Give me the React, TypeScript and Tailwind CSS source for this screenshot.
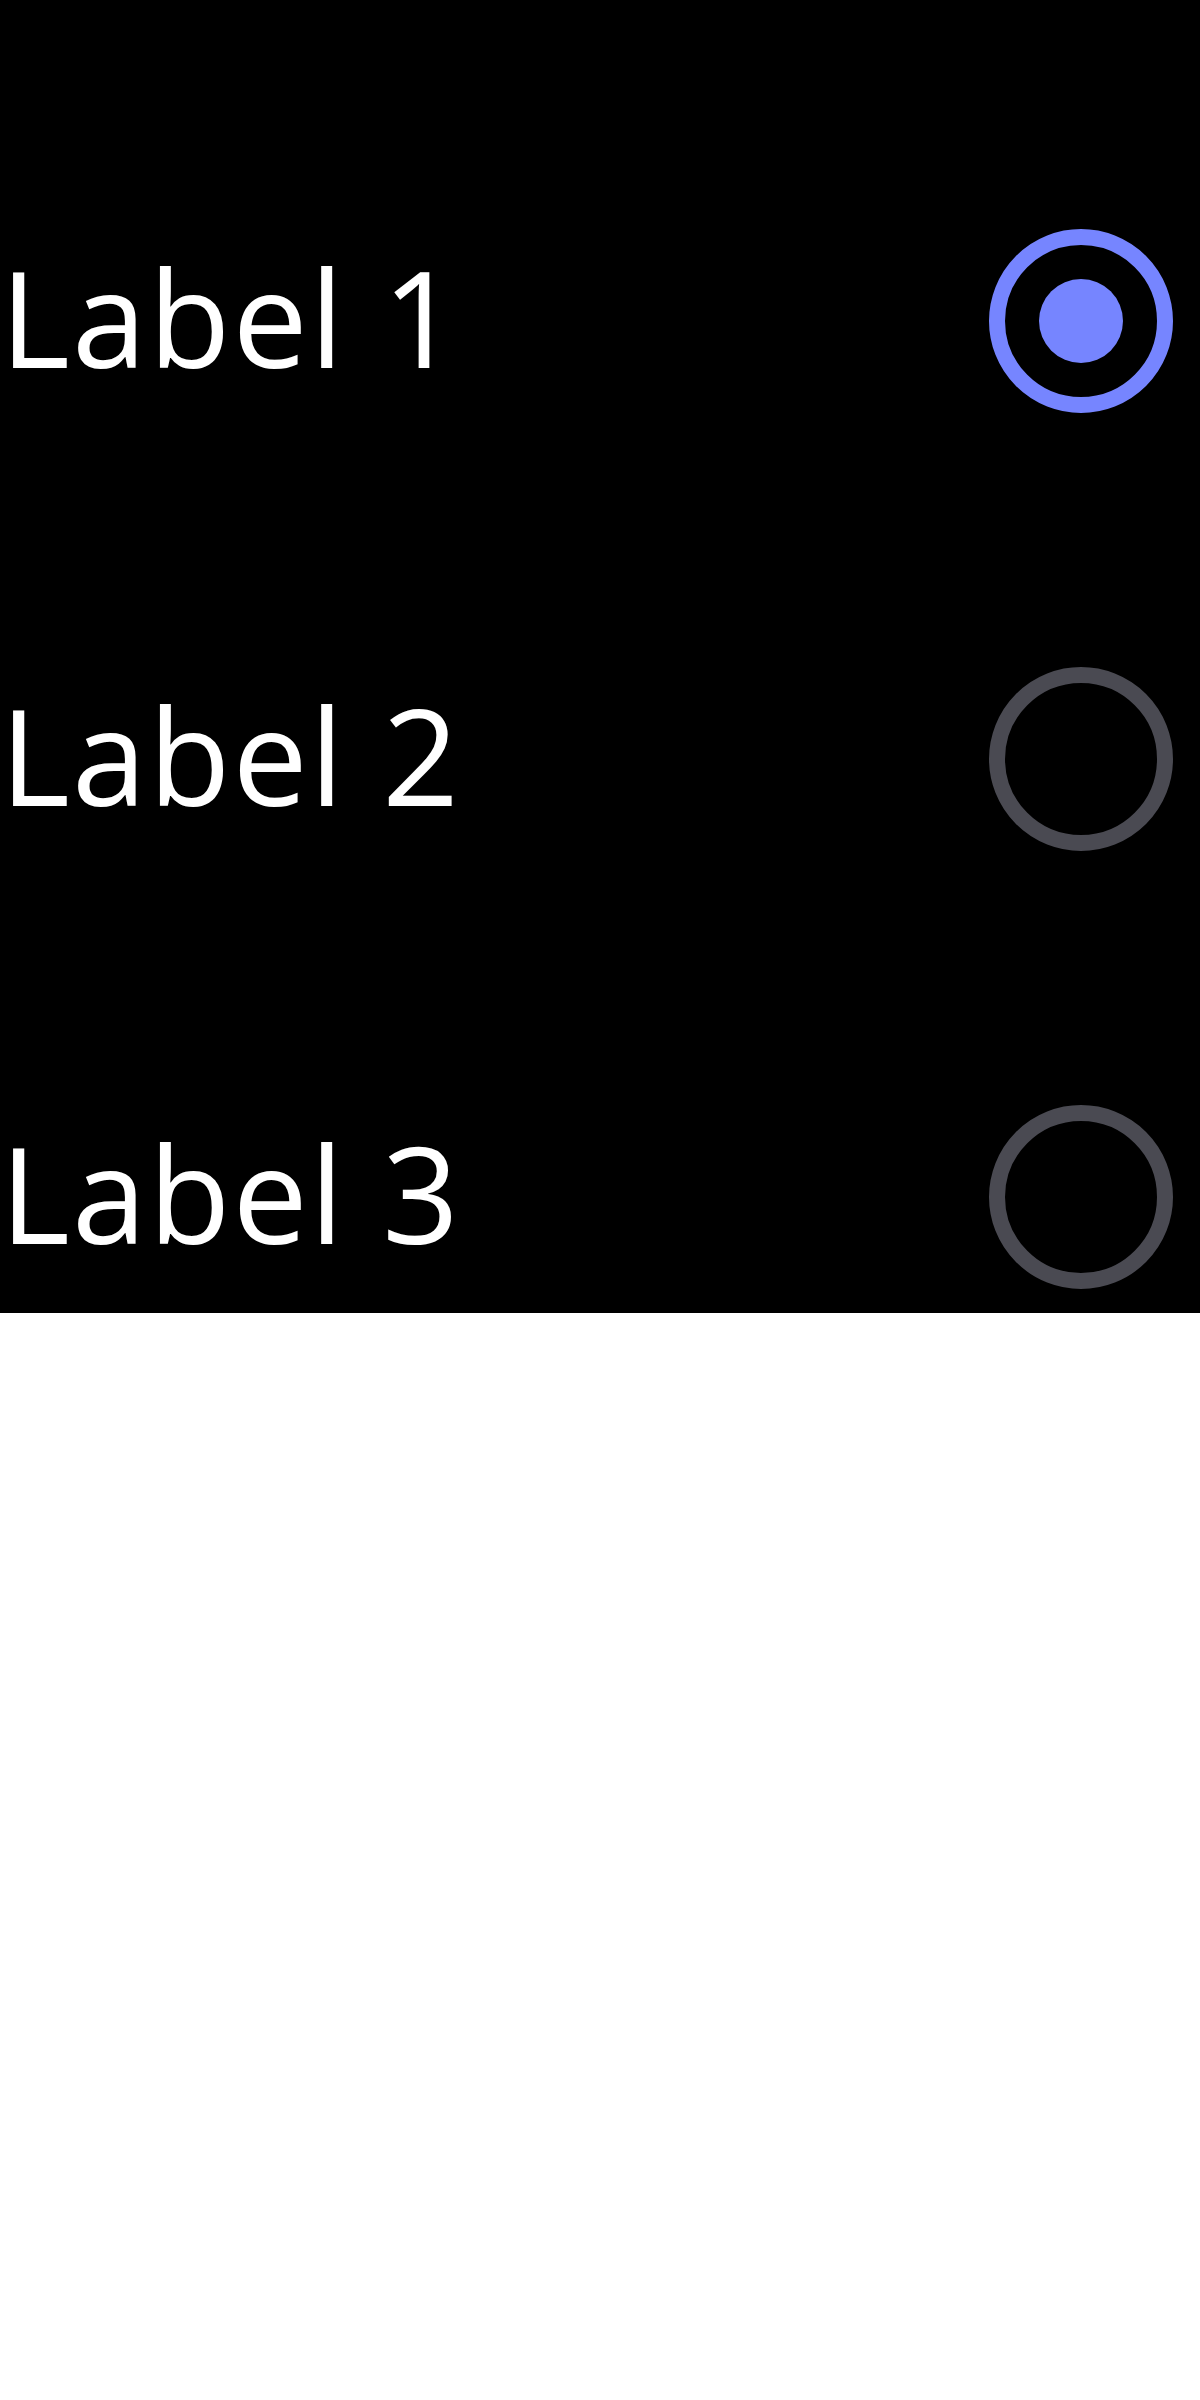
const options = ["Label 1", "Label 2", "Label 3"];

const Radio = ({ checked }: { checked: boolean }) => (
  <div
    className={`flex h-[184px] w-[184px] items-center justify-center rounded-full border-[16px] ${
      checked ? "border-[#7685ff]" : "border-[#4a4a52]"
    }`}
  >
    {checked && <div className="h-[84px] w-[84px] rounded-full bg-[#7685ff]" />}
  </div>
);

export default function App() {
  return (
    <div
      className="h-[1313px] overflow-hidden bg-black pt-[102px]"
      style={{ fontFamily: '"Open Sans", "Noto Sans", sans-serif' }}
    >
      {options.map((label, i) => (
        <div key={label} className="flex h-[438px] items-center justify-between pr-[27px]">
          <span className="pb-[10px] text-[134px] leading-none tracking-[0.015em] text-white">
            {label}
          </span>
          <Radio checked={i === 0} />
        </div>
      ))}
    </div>
  );
}
